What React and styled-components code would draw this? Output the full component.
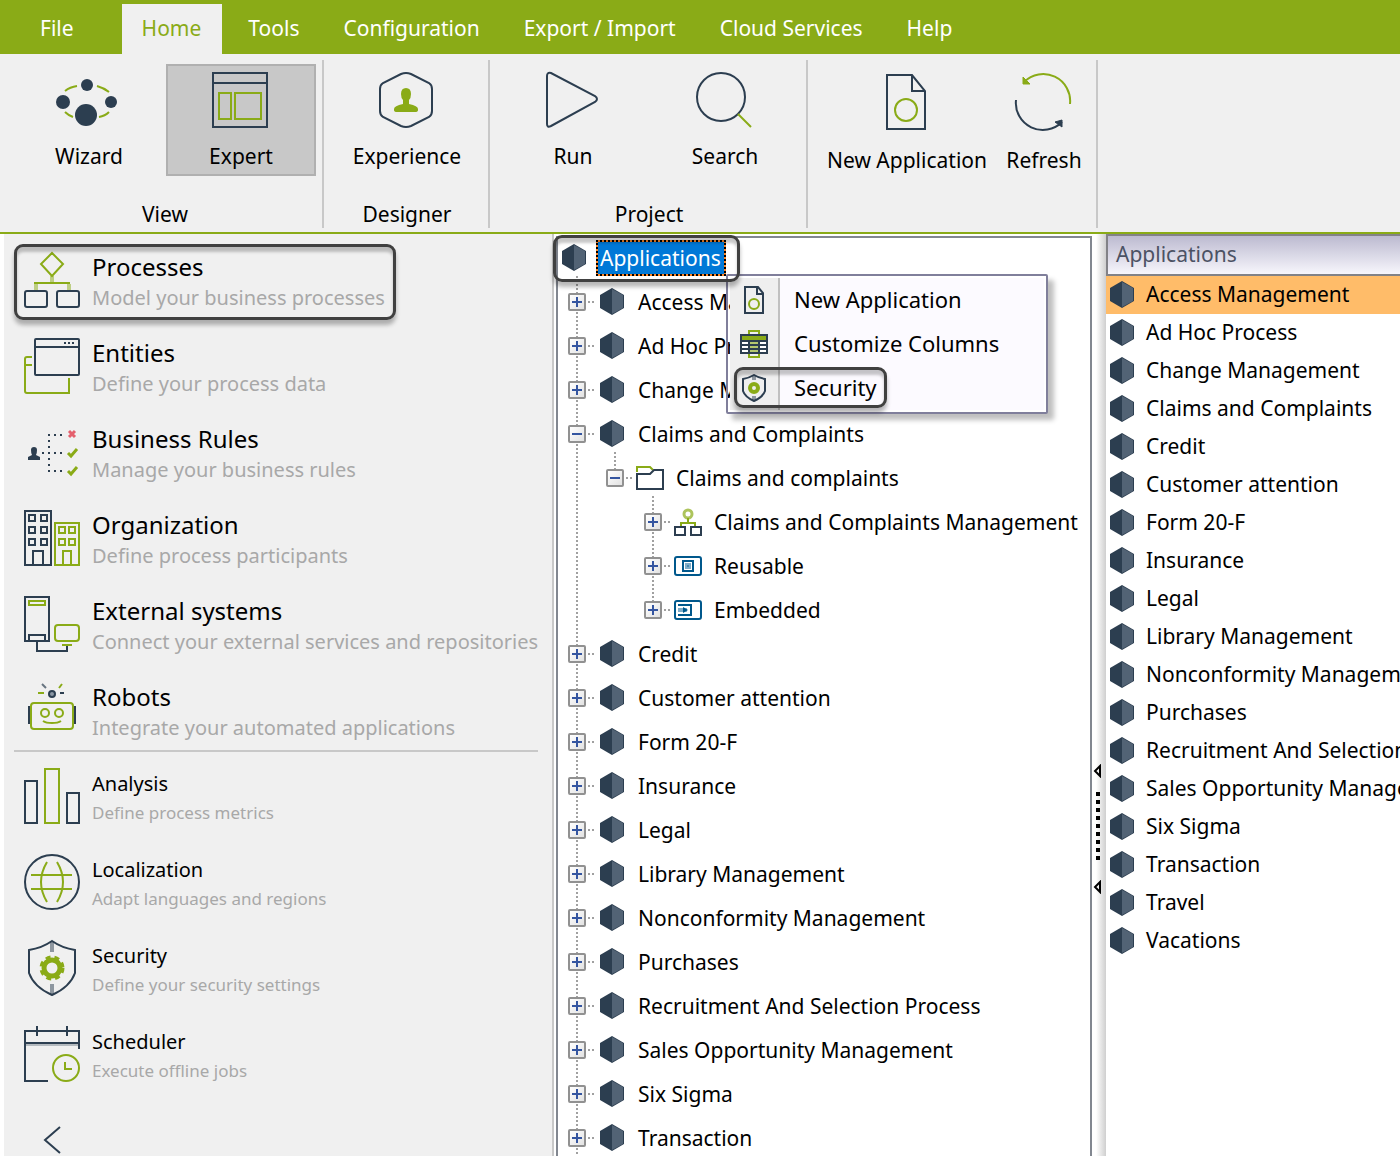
import { useState } from "react";
import styled, { createGlobalStyle, css } from "styled-components";

const NAVY = "#2c3e50";
const GREEN = "#8aab17";

const GlobalStyle = createGlobalStyle`
  * {
    box-sizing: border-box;
  }

  body {
    margin: 0;
    background: #fff;
    color: #000;
    font-family: "Noto Sans", "Open Sans", sans-serif;
    font-size: 21px;
  }

  button {
    padding: 0;
    border: none;
    background: none;
    color: inherit;
    font: inherit;
    cursor: pointer;
  }

  ul {
    margin: 0;
    padding: 0;
    list-style: none;
  }

  svg {
    display: block;
    flex: none;
  }
`;

const Window = styled.div`
  display: flex;
  flex-direction: column;
  height: 100vh;
  overflow: hidden;
`;

/* ---------- menu bar ---------- */

const MenuBar = styled.nav`
  display: flex;
  flex: none;
  height: 54px;
  padding: 4px 0 0 18px;
  background: ${GREEN};
`;

const MenuTab = styled.button`
  padding: 0 22px 2px;
  line-height: 48px;
  white-space: nowrap;
  color: #fff;

  &:first-child {
    margin-right: 26px;
  }

  ${(props) =>
    props.$active &&
    css`
      padding: 0 21px 2px 20px;
      margin-right: 4px;
      background: #f0f0f0;
      color: ${GREEN};
    `}
`;

/* ---------- ribbon ---------- */

const Ribbon = styled.header`
  display: flex;
  flex: none;
  height: 180px;
  padding: 6px 0 4px 6px;
  background: #f0f0f0;
  border-bottom: 2px solid ${GREEN};
`;

const RibbonGroup = styled.section`
  display: flex;
  flex-direction: column;
  justify-content: space-between;
  padding: 4px 6px 0 8px;
  border-right: 2px solid #c8c8c8;
`;

const RibbonButtons = styled.div`
  display: flex;
  gap: ${(props) => (props.$tight ? "0" : "2px")};
`;

const RibbonLabel = styled.div`
  text-align: center;
  line-height: 28px;
`;

const RibbonButton = styled.button`
  display: flex;
  flex-direction: column;
  align-items: center;
  gap: ${(props) => (props.$roomy ? "14px" : "12px")};
  width: ${(props) => props.$width || 150}px;
  height: 112px;
  padding-top: ${(props) => (props.$roomy ? "6px" : "4px")};
  border: 2px solid ${(props) => (props.$active ? "#b0b0b0" : "transparent")};
  background: ${(props) => (props.$active ? "#c8c8c8" : "transparent")};
  line-height: 28px;
  white-space: nowrap;
`;

/* ---------- content ---------- */

const Content = styled.main`
  display: grid;
  grid-template-columns: 552px minmax(0, 540fr) 14px minmax(0, 294fr);
  flex: 1;
  min-height: 0;
`;

const Sidebar = styled.aside`
  display: flex;
  flex-direction: column;
  gap: 4px;
  margin-left: 4px;
  padding: 4px 14px 0 10px;
  background: #f0f0f0;
  overflow: hidden;
`;

const Module = styled.button`
  position: relative;
  display: flex;
  flex: none;
  align-items: flex-start;
  gap: 10px;
  height: 82px;
  padding: 12px 0 0 8px;
  text-align: left;
  white-space: nowrap;
`;

const ModuleText = styled.span`
  display: flex;
  flex-direction: column;
  padding-top: ${(props) => (props.$small ? "4px" : "1px")};
`;

const ModuleTitle = styled.span`
  font-size: ${(props) => (props.$small ? "20px" : "24px")};
  line-height: ${(props) => (props.$small ? "28px" : "32px")};
`;

const ModuleHint = styled.span`
  font-size: ${(props) => (props.$small ? "17px" : "20px")};
  line-height: 30px;
  color: #a8a8a8;
`;

const Divider = styled.hr`
  flex: none;
  width: 100%;
  height: 2px;
  margin: -4px 0 -2px;
  border: none;
  background: #c8c8c8;
`;

const Collapse = styled.button`
  align-self: flex-start;
  margin: 26px 0 0 28px;
`;

/* dark rounded outline drawn over an item */
const Callout = styled.span`
  position: absolute;
  z-index: 2;
  inset: ${(props) => props.$inset};
  width: ${(props) => props.$width};
  border: 3px solid #404040;
  border-radius: 9px;
  box-shadow: 0 5px 4px rgba(0, 0, 0, 0.28), inset 0 5px 3px rgba(0, 0, 0, 0.22);
  pointer-events: none;
`;

/* ---------- tree ---------- */

const TreePane = styled.section`
  padding: 2px 0 0 2px;
  border-left: 2px solid #c8c8c8;
  min-height: 0;
`;

const TreeFrame = styled.div`
  height: 100%;
  border: 2px solid #828790;
  border-bottom: none;
`;

const RootRow = styled.div`
  position: relative;
  display: flex;
  align-items: center;
  gap: 10px;
  height: 42px;
  padding: 0 0 2px 4px;
`;

const RootName = styled.span`
  padding: 0 3px 0 2px;
  border: 2px dotted #000;
  background: linear-gradient(#0078d7, #0078d7) padding-box, #ff8728 border-box;
  color: #fff;
  line-height: 32px;
`;

const Branch = styled.ul`
  margin-top: -4px;
  padding: 4px 0 0 ${(props) => (props.$nested ? "38px" : "0")};
  background: repeating-linear-gradient(#a0a0a0 0 2px, transparent 2px 4px)
    no-repeat ${(props) => (props.$nested ? "56px" : "18px")} 0 / 2px
    ${(props) => props.$line || "100%"};
`;

const TreeRow = styled.div`
  display: flex;
  align-items: center;
  height: 44px;
  padding-left: 10px;
  white-space: nowrap;
`;

const Expander = styled.button`
  display: flex;
  align-items: center;
  justify-content: center;
  width: 18px;
  height: 18px;
  border: 2px solid #919191;
  border-radius: 2px;
  background: linear-gradient(135deg, #fff, #e2e2e2);
`;

const Stub = styled.span`
  width: 12px;
  height: 2px;
  background: repeating-linear-gradient(90deg, transparent 0 2px, #a0a0a0 2px 4px)
    no-repeat 0 0 / 8px 2px;
`;

const IconSlot = styled.span`
  display: flex;
  justify-content: center;
  width: 28px;
  margin-right: 12px;
`;

/* ---------- context menu ---------- */

const ContextMenu = styled.ul`
  position: absolute;
  z-index: 1;
  top: 36px;
  left: 168px;
  width: 322px;
  padding: 2px;
  border: 2px solid #807f9b;
  border-radius: 2px;
  background: linear-gradient(90deg, #efefef 48px, #c0c0c0 48px 50px, #fcfaff 50px)
    content-box #fcfaff;
  box-shadow: 6px 6px 5px rgba(0, 0, 0, 0.25);
`;

const ContextItem = styled.li`
  position: relative;
`;

const ContextButton = styled.button`
  display: flex;
  align-items: center;
  gap: 26px;
  width: 100%;
  height: 44px;
  padding-left: 10px;
  font-size: 22px;
  line-height: 28px;

  span {
    padding-bottom: 2px;
  }
`;

/* ---------- splitter and list ---------- */

const Splitter = styled.div`
  display: flex;
  flex-direction: column;
  align-items: flex-start;
  gap: 14px;
  padding: 530px 0 0 1px;
  background: linear-gradient(90deg, #fff 4px, #f0f0f0 7px, #cfcfcf);
`;

const Grip = styled.div`
  width: 4px;
  height: 74px;
  margin-left: 3px;
  background: repeating-linear-gradient(#000 0 4px, transparent 4px 8px) no-repeat
    0 0 / 4px 68px;
`;

const ListPane = styled.section`
  overflow: hidden;
  white-space: nowrap;
`;

const ListHeader = styled.div`
  height: 42px;
  padding-left: 8px;
  border: 2px solid #828287;
  border-right: none;
  background: linear-gradient(#bcbad0, #f7f6fc);
  color: #4c5264;
  line-height: 36px;
`;

const ListItem = styled.li`
  display: flex;
  align-items: center;
  gap: 12px;
  height: 38px;
  padding-left: 4px;
  background: ${(props) => (props.$selected ? "#ffbc69" : "transparent")};

  span {
    padding-bottom: 2px;
  }
`;

/* ---------- icons ---------- */

function LargeIcon({ children }) {
  return (
    <svg width="68" height="60" viewBox="0 0 68 60" fill="none" stroke={NAVY} strokeWidth="2" aria-hidden="true">
      {children}
    </svg>
  );
}

function ModuleIcon({ children }) {
  return (
    <svg width="60" height="60" viewBox="0 0 60 60" fill="none" stroke={NAVY} strokeWidth="2" aria-hidden="true">
      {children}
    </svg>
  );
}

function SmallIcon({ children }) {
  return (
    <svg width="28" height="28" viewBox="0 0 28 28" fill="none" stroke={NAVY} strokeWidth="2" aria-hidden="true">
      {children}
    </svg>
  );
}

function Hexagon() {
  return (
    <svg width="24" height="28" viewBox="0 0 24 28" aria-hidden="true">
      <path d="M12 0 L24 7 V20 L12 27 L0 20 V7Z" fill={NAVY} />
      <path d="M12 1 L23 7 V20 L12 26Z" fill="#526375" />
    </svg>
  );
}

const wizardIcon = (
  <LargeIcon>
    <path d="M10 21 Q15 17 22 16 M42 16 Q49 18 54 22 M10 42 Q13 45 18 47 M44 47 Q50 46 54 42" stroke={GREEN} />
    <g fill={NAVY} stroke="none">
      <circle cx="8" cy="32" r="7" />
      <circle cx="32" cy="15" r="6" />
      <circle cx="56" cy="32" r="6" />
      <circle cx="31" cy="45" r="11" />
    </g>
  </LargeIcon>
);

const expertIcon = (
  <LargeIcon>
    <path d="M6 3 H60 V57 H6Z M6 13 H60" />
    <path d="M12 23 H24 V49 H12Z M28 23 H54 V49 H28Z" stroke={GREEN} />
  </LargeIcon>
);

const experienceIcon = (
  <LargeIcon>
    <path d="M28 4 Q33 2 38 4 L56 13 Q59 15 59 19 V41 Q59 45 56 47 L38 56 Q33 58 28 56 L10 47 Q7 45 7 41 V19 Q7 15 10 13Z" />
    <path
      d="M33 18 Q38 18 38 24 Q38 28 36 30 V34 Q45 36 45 39 V40 Q45 42 42 42 H24 Q21 42 21 40 V39 Q21 36 30 34 V30 Q28 28 28 24 Q28 18 33 18Z"
      fill={GREEN}
      stroke="none"
    />
  </LargeIcon>
);

const runIcon = (
  <LargeIcon>
    <path d="M8 6 Q8 2 12 3 L56 26 Q60 29 56 32 L12 56 Q8 58 8 54Z" />
  </LargeIcon>
);

const searchIcon = (
  <LargeIcon>
    <circle cx="30" cy="27" r="24" />
    <path d="M47 44 L60 57" stroke={GREEN} />
  </LargeIcon>
);

const newApplicationIcon = (
  <LargeIcon>
    <path d="M14 3 H39 L52 19 V57 H14Z M39 3 V19 H52" />
    <circle cx="33" cy="38" r="11" stroke={GREEN} />
  </LargeIcon>
);

const refreshIcon = (
  <LargeIcon>
    <path d="M14 10 A27 27 0 0 1 60 32" stroke={GREEN} />
    <path d="M13 5 V12 H20Z" fill={GREEN} stroke={GREEN} strokeWidth="1" />
    <path d="M6 28 A27 27 0 0 0 52 50" />
    <path d="M45 50 L52 48 V55Z" fill={NAVY} strokeWidth="1" />
  </LargeIcon>
);

const processesIcon = (
  <ModuleIcon>
    <g stroke={GREEN}>
      <path d="M30 3 L41 14 L30 26 L19 14Z M12 33 H48" />
      <path d="M30 26 V32 M14 34 V40 M47 34 V40" strokeWidth="4" opacity="0.5" />
    </g>
    <rect x="3" y="41" width="22" height="16" rx="2" />
    <rect x="35" y="41" width="22" height="16" rx="2" />
  </ModuleIcon>
);

const entitiesIcon = (
  <ModuleIcon>
    <rect x="13" y="3" width="44" height="36" rx="1" />
    <path d="M13 11 H57" />
    <path d="M42 7 H52" strokeDasharray="2 2" />
    <path d="M10 21 H5 Q3 21 3 23 V55 Q3 57 5 57 H47 V42 M3 29 H10" stroke={GREEN} />
  </ModuleIcon>
);

const rulesIcon = (
  <ModuleIcon>
    <path d="M26 13 H40 M20 31 H40 M26 49 H40" strokeDasharray="2 4" />
    <path d="M27 18 V48" strokeDasharray="2 4" />
    <path d="M12 25 Q15 25 15 28 Q15 31 14 33 L18 35 V38 H6 V35 L10 33 Q9 31 9 28 Q9 25 12 25Z" fill={NAVY} stroke="none" />
    <path d="M47 9 L53 15 M53 9 L47 15" stroke="#e4606d" strokeWidth="3" />
    <path d="M46 31 L49 34 L55 27 M46 49 L49 52 L55 45" stroke={GREEN} strokeWidth="3" />
  </ModuleIcon>
);

const organizationIcon = (
  <ModuleIcon>
    <path d="M3 3 H29 V57 H3Z M11 57 V43 H21 V57" />
    <path d="M7 7h6v6h-6z M19 7h6v6h-6z M7 19h6v6h-6z M19 19h6v6h-6z M7 31h6v6h-6z M19 31h6v6h-6z" />
    <g stroke={GREEN}>
      <path d="M33 15 H57 V57 H33Z M41 57 V43 H49 V57" />
      <path d="M37 19h6v6h-6z M47 19h6v6h-6z M37 31h6v6h-6z M47 31h6v6h-6z" />
    </g>
  </ModuleIcon>
);

const externalIcon = (
  <ModuleIcon>
    <path d="M3 3 H27 V47 H3Z M7 46 V41 H23 V46 M15 48 V57 H45 V52" />
    <g stroke={GREEN}>
      <path d="M7 7 H23 V11 H7Z M40 51 H50" />
      <rect x="33" y="31" width="24" height="16" rx="3" />
    </g>
  </ModuleIcon>
);

const robotsIcon = (
  <ModuleIcon>
    <path d="M7 26 V44 M53 26 V44 M38 13 H42" />
    <path d="M20 4 L24 8" opacity="0.7" />
    <circle cx="30" cy="14" r="3" fill="#8a96a3" />
    <g stroke={GREEN}>
      <rect x="9" y="23" width="42" height="26" rx="3" />
      <circle cx="23" cy="33" r="4" />
      <circle cx="37" cy="33" r="4" />
      <path d="M21 41 Q24 43 30 43 Q36 43 39 41 M16 13 H22 M40 4 L37 8" />
    </g>
  </ModuleIcon>
);

const analysisIcon = (
  <ModuleIcon>
    <path d="M3 15 H15 V57 H3Z M45 27 H57 V57 H45Z" />
    <path d="M23 3 H37 V57 H23Z" stroke={GREEN} />
  </ModuleIcon>
);

const localizationIcon = (
  <ModuleIcon>
    <circle cx="30" cy="30" r="27" />
    <path d="M9 23 H50 M9 37 H50 M25 10 Q13 30 25 50 M35 10 Q47 30 35 50" stroke={GREEN} />
  </ModuleIcon>
);

const securityIcon = (
  <ModuleIcon>
    <path d="M30 3 Q20 10 7 12 V35 Q12 49 30 57 Q48 49 53 35 V12 Q40 10 30 3Z" />
    <path d="M30 4 V14 M30 46 V56" strokeWidth="4" opacity="0.5" />
    <circle cx="30" cy="30" r="8" stroke={GREEN} strokeWidth="5" />
    <circle cx="30" cy="30" r="11" stroke={GREEN} strokeWidth="3" strokeDasharray="5 4" />
  </ModuleIcon>
);

const schedulerIcon = (
  <ModuleIcon>
    <path d="M26 57 H3 V7 H57 V25 M15 2 V12 M45 2 V12 M3 19 H57" />
    <path d="M4 21 H56" opacity="0.3" />
    <circle cx="44" cy="44" r="13" stroke={GREEN} />
    <path d="M43 38 V45 H50" stroke={GREEN} />
  </ModuleIcon>
);

const folderIcon = (
  <SmallIcon>
    <path d="M1 8 V3 H14 L17 6" stroke={GREEN} />
    <path d="M1 10 H14 L18 6 H27 V25 H1Z" />
  </SmallIcon>
);

const flowIcon = (
  <SmallIcon>
    <circle cx="14" cy="6" r="4" stroke={GREEN} strokeWidth="3" opacity="0.7" />
    <path d="M14 10 V15 M7 18 V15 H21 V18" stroke={GREEN} />
    <path d="M1 19 H11 V27 H1Z M17 19 H27 V27 H17Z" />
  </SmallIcon>
);

const reusableIcon = (
  <SmallIcon>
    <g stroke="#00588c">
      <rect x="1" y="5" width="26" height="18" rx="2" />
      <path d="M9 9 H19 V19 H9Z" />
      <path d="M12 12 H16 V16 H12Z" fill="#4c8bb0" stroke="#7fadc8" />
    </g>
  </SmallIcon>
);

const embeddedIcon = (
  <SmallIcon>
    <g stroke="#00588c">
      <rect x="1" y="5" width="26" height="18" rx="2" />
      <path d="M4 9 H17 V19 H4" />
      <path d="M4 14 H13" stroke="#7fadc8" strokeWidth="4" />
      <path d="M9 11 L14 14 L9 17Z" fill="#00588c" stroke="none" />
    </g>
  </SmallIcon>
);

const menuPageIcon = (
  <SmallIcon>
    <path d="M5 1 H18 L23 7 V27 H5Z M17 1 V8 H23" />
    <circle cx="14" cy="18" r="5" stroke={GREEN} />
  </SmallIcon>
);

const menuColumnsIcon = (
  <SmallIcon>
    <rect x="0" y="4" width="28" height="20" fill={NAVY} stroke="none" />
    <path d="M2 8 H26" stroke={GREEN} strokeWidth="4" />
    <path d="M2 13 H8 M20 13 H26 M2 17 H8 M20 17 H26 M2 21 H8 M20 21 H26" stroke="#fff" />
    <path d="M10 13 H18 M10 17 H18 M10 21 H18" stroke="#b4c76e" />
    <path d="M9 4 V1 H19 V4 M9 24 V27 H19 V24" stroke={GREEN} />
  </SmallIcon>
);

const menuShieldIcon = (
  <SmallIcon>
    <path d="M14 1 Q9 4 3 5 V17 Q5 23 14 27 Q23 23 25 17 V5 Q19 4 14 1Z" />
    <path d="M14 2 V6 M14 22 V26" strokeWidth="4" opacity="0.5" />
    <circle cx="14" cy="14" r="4" stroke={GREEN} strokeWidth="4" />
  </SmallIcon>
);

/* ---------- data ---------- */

const tabs = ["File", "Home", "Tools", "Configuration", "Export / Import", "Cloud Services", "Help"];

const modules = [
  { title: "Processes", hint: "Model your business processes", icon: processesIcon, marked: true },
  { title: "Entities", hint: "Define your process data", icon: entitiesIcon },
  { title: "Business Rules", hint: "Manage your business rules", icon: rulesIcon },
  { title: "Organization", hint: "Define process participants", icon: organizationIcon },
  { title: "External systems", hint: "Connect your external services and repositories", icon: externalIcon },
  { title: "Robots", hint: "Integrate your automated applications", icon: robotsIcon },
];

const tools = [
  { title: "Analysis", hint: "Define process metrics", icon: analysisIcon },
  { title: "Localization", hint: "Adapt languages and regions", icon: localizationIcon },
  { title: "Security", hint: "Define your security settings", icon: securityIcon },
  { title: "Scheduler", hint: "Execute offline jobs", icon: schedulerIcon },
];

const applications = [
  "Access Management",
  "Ad Hoc Process",
  "Change Management",
  "Claims and Complaints",
  "Credit",
  "Customer attention",
  "Form 20-F",
  "Insurance",
  "Legal",
  "Library Management",
  "Nonconformity Management",
  "Purchases",
  "Recruitment And Selection Process",
  "Sales Opportunity Management",
  "Six Sigma",
  "Transaction",
  "Travel",
  "Vacations",
];

const claimsFolder = {
  name: "Claims and complaints",
  icon: folderIcon,
  line: "calc(100% - 22px)",
  children: [
    { name: "Claims and Complaints Management", icon: flowIcon },
    { name: "Reusable", icon: reusableIcon },
    { name: "Embedded", icon: embeddedIcon },
  ],
};

const contextItems = [
  { name: "New Application", icon: menuPageIcon },
  { name: "Customize Columns", icon: menuColumnsIcon },
  { name: "Security", icon: menuShieldIcon, marked: true },
];

/* ---------- components ---------- */

function TreeNode({ name, icon, line, children }) {
  const [open, setOpen] = useState(Boolean(children));

  return (
    <li>
      <TreeRow>
        <Expander aria-label={`Toggle ${name}`} aria-expanded={open} onClick={() => setOpen(!open)}>
          <svg width="10" height="10" viewBox="0 0 10 10" stroke="#3455a0" strokeWidth="2">
            <path d={open ? "M0 5 H10" : "M0 5 H10 M5 0 V10"} />
          </svg>
        </Expander>
        <Stub />
        <IconSlot>{icon}</IconSlot>
        <span>{name}</span>
      </TreeRow>
      {open && children && (
        <Branch $nested $line={line}>
          {children.map((child) => (
            <TreeNode key={child.name} {...child} />
          ))}
        </Branch>
      )}
    </li>
  );
}

function ModuleButton({ title, hint, icon, marked, small }) {
  return (
    <Module>
      {icon}
      <ModuleText $small={small}>
        <ModuleTitle $small={small}>{title}</ModuleTitle>
        <ModuleHint $small={small}>{hint}</ModuleHint>
      </ModuleText>
      {marked && <Callout $inset="6px auto 0 0" $width="382px" />}
    </Module>
  );
}

function SplitterArrow() {
  return (
    <svg width="10" height="14" viewBox="0 0 10 14" fill="none" stroke="#000" strokeWidth="2" aria-hidden="true">
      <path d="M7 2 V12 L2 7Z" />
    </svg>
  );
}

export default function App() {
  const [activeTab, setActiveTab] = useState("Home");
  const [selected, setSelected] = useState("Access Management");

  return (
    <>
      <GlobalStyle />
      <Window>
        <MenuBar>
          {tabs.map((tab) => (
            <MenuTab key={tab} $active={tab === activeTab} onClick={() => setActiveTab(tab)}>
              {tab}
            </MenuTab>
          ))}
        </MenuBar>

        <Ribbon>
          <RibbonGroup>
            <RibbonButtons>
              <RibbonButton>{wizardIcon}Wizard</RibbonButton>
              <RibbonButton $active>{expertIcon}Expert</RibbonButton>
            </RibbonButtons>
            <RibbonLabel>View</RibbonLabel>
          </RibbonGroup>
          <RibbonGroup>
            <RibbonButtons>
              <RibbonButton>{experienceIcon}Experience</RibbonButton>
            </RibbonButtons>
            <RibbonLabel>Designer</RibbonLabel>
          </RibbonGroup>
          <RibbonGroup>
            <RibbonButtons>
              <RibbonButton>{runIcon}Run</RibbonButton>
              <RibbonButton>{searchIcon}Search</RibbonButton>
            </RibbonButtons>
            <RibbonLabel>Project</RibbonLabel>
          </RibbonGroup>
          <RibbonGroup>
            <RibbonButtons $tight>
              <RibbonButton $roomy $width={182}>{newApplicationIcon}New Application</RibbonButton>
              <RibbonButton $roomy $width={92}>{refreshIcon}Refresh</RibbonButton>
            </RibbonButtons>
          </RibbonGroup>
        </Ribbon>

        <Content>
          <Sidebar>
            {modules.map((item) => (
              <ModuleButton key={item.title} {...item} />
            ))}
            <Divider />
            {tools.map((item) => (
              <ModuleButton key={item.title} small {...item} />
            ))}
            <Collapse aria-label="Collapse panel">
              <svg width="20" height="32" viewBox="0 0 20 32" fill="none" stroke={NAVY} strokeWidth="2">
                <path d="M18 3 L3 16 L18 29" />
              </svg>
            </Collapse>
          </Sidebar>

          <TreePane>
            <TreeFrame>
              <RootRow>
                <Hexagon />
                <RootName>Applications</RootName>
                <Callout $inset="-3px auto -2px -5px" $width="187px" />
                <ContextMenu>
                  {contextItems.map((item) => (
                    <ContextItem key={item.name}>
                      <ContextButton>
                        {item.icon}
                        <span>{item.name}</span>
                      </ContextButton>
                      {item.marked && <Callout $inset="1px auto 2px 4px" $width="153px" />}
                    </ContextItem>
                  ))}
                </ContextMenu>
              </RootRow>
              <Branch>
                {applications.map((name) => (
                  <TreeNode key={name} name={name} icon={<Hexagon />} line="22px">
                    {name === "Claims and Complaints" ? [claimsFolder] : undefined}
                  </TreeNode>
                ))}
              </Branch>
            </TreeFrame>
          </TreePane>

          <Splitter>
            <SplitterArrow />
            <Grip />
            <SplitterArrow />
          </Splitter>

          <ListPane>
            <ListHeader>Applications</ListHeader>
            <ul>
              {applications.map((name) => (
                <ListItem key={name} $selected={name === selected} onClick={() => setSelected(name)}>
                  <Hexagon />
                  <span>{name}</span>
                </ListItem>
              ))}
            </ul>
          </ListPane>
        </Content>
      </Window>
    </>
  );
}
